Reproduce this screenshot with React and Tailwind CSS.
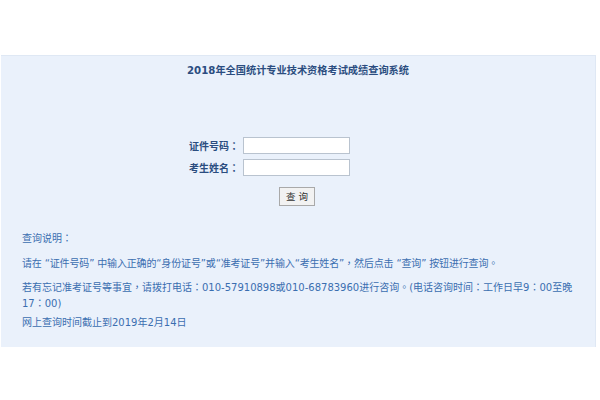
import React from 'react'

const font = { fontFamily: '"DejaVu Sans", "Noto Sans CJK SC", sans-serif' }

// full-width punctuation, drawn by the CJK font so it keeps its full width
function P({ children }) {
  return <span className="font-['Noto_Sans_CJK_TC']">{children}</span>
}

function QueryForm() {
  return (
    <div className="flex flex-col gap-[5px] pl-[177px]">
      <div className="flex items-center gap-[4px]">
        <span className="w-[61px] text-right text-[10px] font-bold text-[#2b4d80] whitespace-nowrap">证件号码<P>：</P></span>
        <input className="w-[107px] h-[17px] bg-white border border-[#b9c3cf] outline-none" />
      </div>
      <div className="flex items-center gap-[4px]">
        <span className="w-[61px] text-right text-[10px] font-bold text-[#2b4d80] whitespace-nowrap">考生姓名<P>：</P></span>
        <input className="w-[107px] h-[17px] bg-white border border-[#b9c3cf] outline-none" />
      </div>
      <div className="pl-[101px] pt-[2px]">
        <button className="w-[36px] h-[19px] bg-[#f2f2f2] border border-[#a9a9a9] text-[9.5px] text-[#333] leading-none">查 询</button>
      </div>
    </div>
  )
}

export default function App() {
  return (
    <div className="w-[600px] h-[400px] bg-white overflow-hidden" style={font}>
      <div className="mt-[55px] ml-[1px] w-[595px] h-[292px] bg-[#eaf1fb] border-t border-r border-[#dfe8f4]">
        <div className="pt-[8px] text-center text-[10.2px] font-bold leading-[14px] text-[#2b4d80]">
          2018年全国统计专业技术资格考试成绩查询系统
        </div>

        <div className="pt-[59px]">
          <QueryForm />
        </div>

        <div className="pl-[21px] pt-[23px] text-[10px] leading-[15px] text-[#3a6eb0] whitespace-nowrap">
          <p>查询说明<P>：</P></p>
          <p className="mt-[9px] tracking-[-0.15px]">
            请在 “证件号码” 中输入正确的“身份证号”或“准考证号”并输入“考生姓名”<P>，</P>然后点击 “查询” 按钮进行查询<P>。</P>
          </p>
          <p className="mt-[8px]">
            若有忘记准考证号等事宜<P>，</P>请拨打电话<P>：</P>010-57910898或010-68783960进行咨询<P>。</P>(电话咨询时间<P>：</P>工作日早9<P>：</P>00至晚
            <br />
            17<P>：</P>00)
          </p>
          <p className="mt-[4px]">网上查询时间截止到2019年2月14日</p>
        </div>
      </div>
    </div>
  )
}
